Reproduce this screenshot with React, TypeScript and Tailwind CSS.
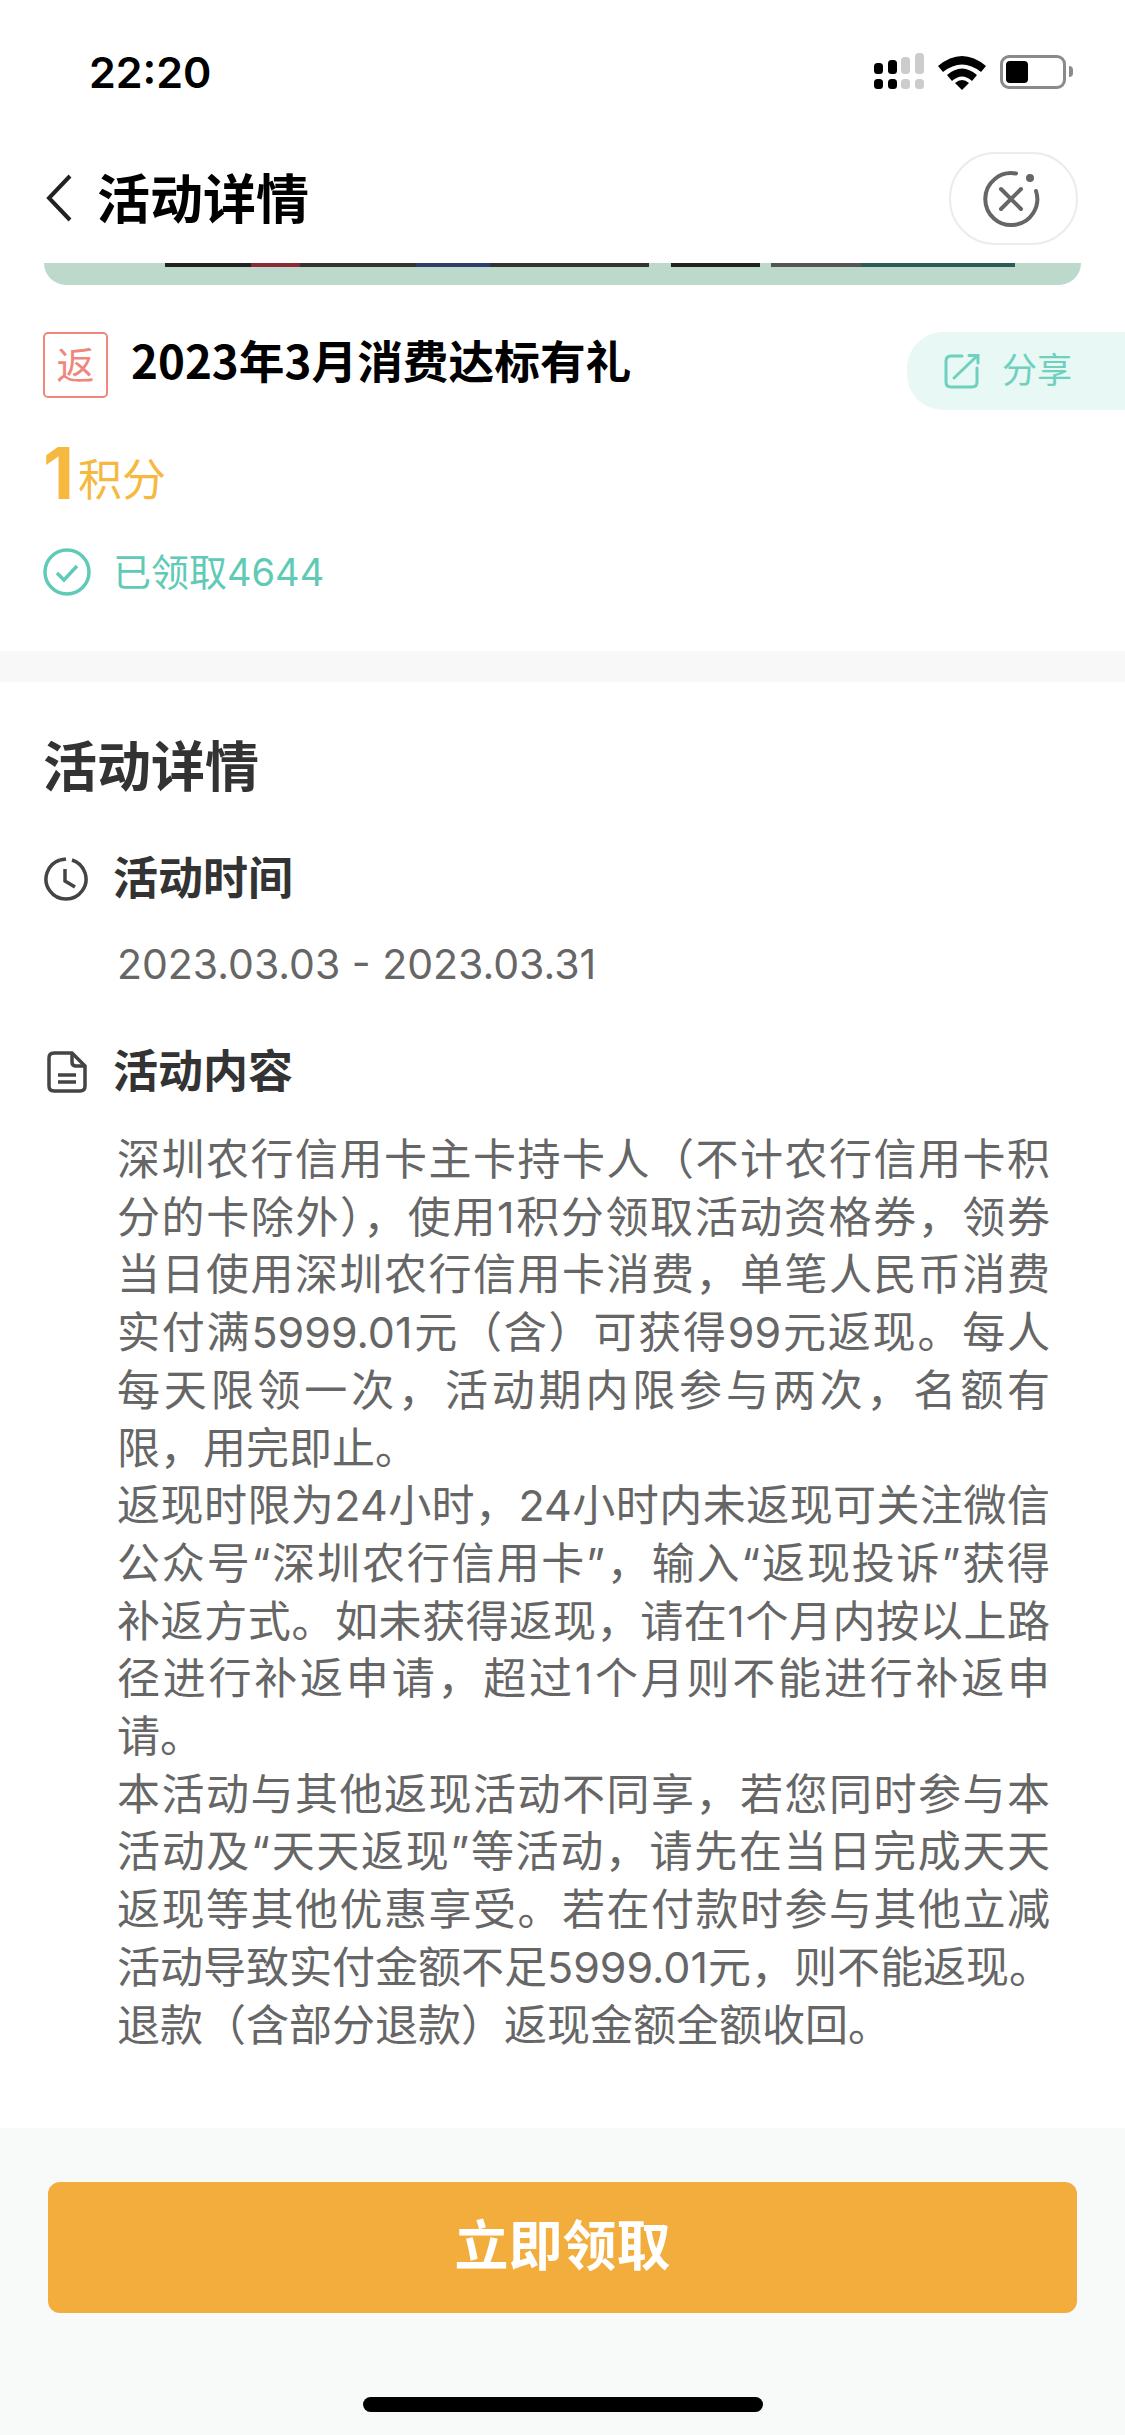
const cjk = "font-['Inter','Noto_Sans_CJK_SC','Liberation_Sans',sans-serif]";

const bodyLines = [
  { text: '深圳农行信用卡主卡持卡人（不计农行信用卡积', end: false },
  { text: '分的卡除外），使用1积分领取活动资格券，领券', end: false },
  { text: '当日使用深圳农行信用卡消费，单笔人民币消费', end: false },
  { text: '实付满5999.01元（含）可获得99元返现。每人', end: false },
  { text: '每天限领一次，活动期内限参与两次，名额有', end: false },
  { text: '限，用完即止。', end: true },
  { text: '返现时限为24小时，24小时内未返现可关注微信', end: false },
  { text: '公众号“深圳农行信用卡”，输入“返现投诉”获得', end: false },
  { text: '补返方式。如未获得返现，请在1个月内按以上路', end: false },
  { text: '径进行补返申请，超过1个月则不能进行补返申', end: false },
  { text: '请。', end: true },
  { text: '本活动与其他返现活动不同享，若您同时参与本', end: false },
  { text: '活动及“天天返现”等活动，请先在当日完成天天', end: false },
  { text: '返现等其他优惠享受。若在付款时参与其他立减', end: false },
  { text: '活动导致实付金额不足5999.01元，则不能返现。', end: false },
  { text: '退款（含部分退款）返现金额全额收回。', end: true },
];

function StatusBar() {
  return (
    <div className="flex h-[152px] shrink-0 items-start justify-between pl-[89px] pr-[52px] pt-[45px]">
      <span className="font-['Inter','Liberation_Sans',sans-serif] text-[43px] font-semibold leading-[54px] text-black">
        22:20
      </span>
      <div className="flex items-center gap-[14px] pt-[8px]">
        <svg width="50" height="37" viewBox="0 0 50 37">
          <rect x="0" y="10" width="9" height="11" rx="3.5" fill="#000" />
          <rect x="14" y="7" width="9" height="14" rx="3.5" fill="#000" />
          <rect x="27" y="4" width="9" height="17" rx="3.5" fill="#cccccc" />
          <rect x="41" y="0" width="9" height="21" rx="3.5" fill="#cccccc" />
          <rect x="0" y="26" width="9" height="10" rx="3.5" fill="#000" />
          <rect x="14" y="26" width="9" height="10" rx="3.5" fill="#000" />
          <rect x="27" y="26" width="9" height="10" rx="3.5" fill="#cccccc" />
          <rect x="41" y="26" width="9" height="10" rx="3.5" fill="#cccccc" />
        </svg>
        <svg width="48" height="36" viewBox="0 0 48 36">
          <path d="M0 12 Q24 -8 48 12 L43 18 Q24 3 5 18 Z" fill="#000" />
          <path d="M9 21 Q24 8 39 21 L34 27 Q24 18 14 27 Z" fill="#000" />
          <path d="M17 29 Q24 23 31 29 L24 36 Z" fill="#000" />
        </svg>
        <div className="flex items-center">
          <div className="flex h-[34px] w-[66px] items-center rounded-[9px] border-[3px] border-[#8a8a8a] p-[3px]">
            <div className="h-full w-[22px] rounded-[4px] bg-black" />
          </div>
          <div className="ml-[3px] h-[11px] w-[4px] rounded-r-full bg-[#8a8a8a]" />
        </div>
      </div>
    </div>
  );
}

function Header() {
  return (
    <div className="flex h-[111px] shrink-0 items-start justify-between pl-[44px] pr-[47px]">
      <div className={`flex items-center gap-[23px] pt-[13px] ${cjk}`}>
        <svg width="30" height="50" viewBox="0 0 30 50" fill="none">
          <path d="M26 3 L5 25 L26 47" stroke="#222" strokeWidth="4" />
        </svg>
        <span className="pt-[5px] text-[53px] font-bold leading-[60px] text-black">活动详情</span>
      </div>
      <div className="flex h-[93px] w-[129px] items-center justify-center rounded-[46px] border-2 border-[#ececec] bg-white">
        <svg className="mr-[6px]" width="58" height="58" viewBox="0 0 58 58" fill="none" stroke="#666" strokeLinecap="round">
          <path d="M34 3.5 A26 26 0 1 0 54 21" strokeWidth="4" />
          <path d="M19 19 L39 39 M39 19 L19 39" strokeWidth="4" />
          <circle cx="48" cy="8" r="4" fill="#666" stroke="none" />
        </svg>
      </div>
    </div>
  );
}

// the banner image is scrolled away, only its lower edge still shows
function Banner() {
  return (
    <div className="mx-[44px] h-[22px] shrink-0 rounded-b-[28px] bg-[#bcd9cc] pl-[121px]">
      <div className="flex h-[4px]">
        <div className="w-[86px] bg-[#222222]" />
        <div className="w-[49px] bg-[#8a2a35]" />
        <div className="w-[116px] bg-[#333333]" />
        <div className="w-[74px] bg-[#2f3c70]" />
        <div className="w-[159px] bg-[#333333]" />
        <div className="ml-[22px] w-[89px] bg-[#222222]" />
        <div className="ml-[11px] w-[90px] bg-[#555555]" />
        <div className="w-[154px] bg-[#2c5a55]" />
      </div>
    </div>
  );
}

function Summary() {
  return (
    <div className={`flex h-[366px] shrink-0 flex-col pl-[43px] pt-[47px] ${cjk}`}>
      <div className="flex h-[78px] items-start justify-between">
        <div className="flex items-start gap-[23px]">
          <div className="flex h-[66px] w-[65px] items-center justify-center rounded-[5px] border-2 border-[#f0877c] text-[38px] leading-none text-[#f0877c]">
            返
          </div>
          <span className="-mt-[2px] font-['Noto_Sans_CJK_SC',sans-serif] text-[45.7px] font-bold leading-[58px] text-black">
            2023年3月消费达标有礼
          </span>
        </div>
        <div className="flex h-[78px] w-[218px] items-center gap-[22px] rounded-l-[36px] bg-[#e8f8f5] pb-[1px] pl-[37px]">
          <svg width="36" height="36" viewBox="0 0 36 36" fill="none" stroke="#6fd0bd" strokeWidth="3" strokeLinecap="round">
            <path d="M18 3 H7 Q2 3 2 8 V29 Q2 34 7 34 H28 Q33 34 33 29 V15" />
            <path d="M10 25 L33 3 M25 2.5 H34 V10" />
          </svg>
          <span className="text-[35px] leading-none text-[#6fd0bd]">分享</span>
        </div>
      </div>
      <div className="mt-[28px] flex h-[70px] items-end">
        <span className="text-[72px] font-bold leading-[70px] text-[#f5b93f]">1</span>
        <span className="ml-[4px] text-[44px] leading-[56px] text-[#f5b93f]">积分</span>
      </div>
      <div className="mt-[40px] flex items-center gap-[22px]">
        <svg width="48" height="48" viewBox="0 0 48 48" fill="none" stroke="#5fcab5" strokeWidth="3.5">
          <circle cx="24" cy="24" r="22" />
          <path d="M14 25 L21 32 L34 18" />
        </svg>
        <span className="text-[38px] leading-[48px] text-[#5fcab5]">已领取4644</span>
      </div>
    </div>
  );
}

function Details() {
  return (
    <div className={`flex-1 bg-white pl-[43px] pr-[75px] pt-[54px] ${cjk}`}>
      <h2 className="text-[54px] font-bold leading-[64px] text-[#333]">活动详情</h2>
      <div className="mt-[50px] flex items-center gap-[24px]">
        <svg width="46" height="46" viewBox="0 0 46 46" fill="none" stroke="#444" strokeWidth="3.5">
          <path d="M29 4 A20 20 0 1 1 17 4" />
          <path d="M17 4 L23 3" />
          <path d="M22 13 V25 L32 31" />
        </svg>
        <span className="text-[45px] font-bold leading-[58px] text-[#333]">活动时间</span>
      </div>
      <p className="mt-[30px] pl-[74px] text-[41px] leading-[52px] text-[#666]">2023.03.03 - 2023.03.31</p>
      <div className="mt-[53px] flex items-center gap-[26px] pl-[4px]">
        <svg width="40" height="42" viewBox="0 0 40 42" fill="none" stroke="#444" strokeWidth="3.5">
          <path d="M25 2 H7 Q2 2 2 7 V35 Q2 40 7 40 H33 Q38 40 38 35 V15 Z" />
          <path d="M25 2 V11 Q25 15 29 15 H38" />
          <path d="M11 24 H29 M11 31 H29" />
        </svg>
        <span className="text-[45px] font-bold leading-[58px] text-[#333]">活动内容</span>
      </div>
      <div className="mt-[30px] pl-[74px] text-[43px] leading-[57.7px] text-[#666]">
        {bodyLines.map((line) => (
          <div key={line.text} className={line.end ? 'whitespace-nowrap' : 'whitespace-nowrap [text-align-last:justify]'}>
            {line.text}
          </div>
        ))}
      </div>
    </div>
  );
}

function Footer() {
  return (
    <div className={`flex h-[307px] shrink-0 flex-col items-center bg-[#f8f9f9] pt-[54px] ${cjk}`}>
      <button className="flex h-[131px] w-[1029px] items-center justify-center rounded-[12px] bg-[#f2ad3d] pb-[2px] text-[54px] font-bold text-white">
        立即领取
      </button>
      <div className="mt-[84px] h-[15px] w-[400px] rounded-full bg-black" />
    </div>
  );
}

export default function App() {
  return (
    <div className="flex h-[2435px] w-[1125px] flex-col overflow-hidden bg-white">
      <StatusBar />
      <Header />
      <Banner />
      <Summary />
      <div className="h-[31px] shrink-0 bg-[#f8f8f8]" />
      <Details />
      <Footer />
    </div>
  );
}
